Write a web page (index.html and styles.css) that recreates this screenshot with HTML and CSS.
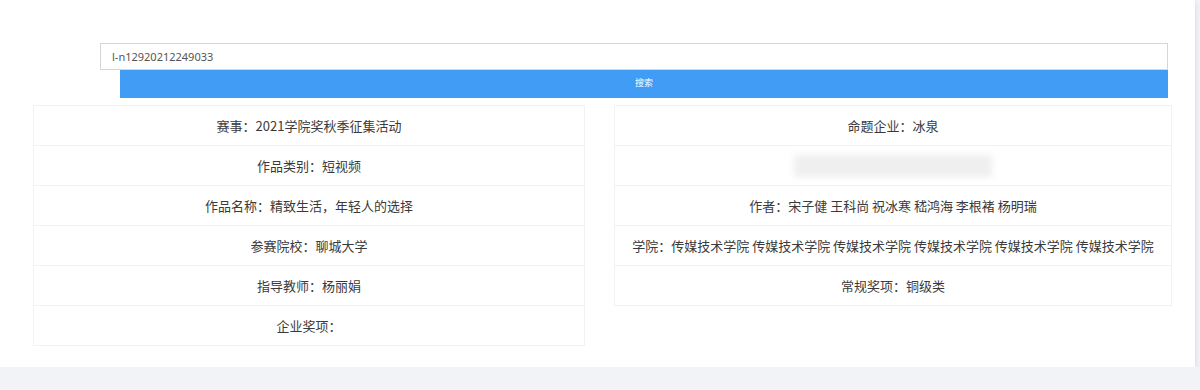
FILE: index.html
```html
<!DOCTYPE html>
<html lang="zh">
<head>
    <meta charset="UTF-8">
    <title>作品查询</title>
    <link rel="stylesheet" href="styles.css">
</head>
<body>
    <div class="card">
        <div class="search">
            <input class="search-input" type="text" value="l-n12920212249033">
            <button class="search-button">搜索</button>
        </div>
        <div class="info">
            <div class="column">
                <div class="row">赛事：2021学院奖秋季征集活动</div>
                <div class="row">作品类别：短视频</div>
                <div class="row">作品名称：精致生活，年轻人的选择</div>
                <div class="row">参赛院校：聊城大学</div>
                <div class="row">指导教师：杨丽娟</div>
                <div class="row">企业奖项：</div>
            </div>
            <div class="column right">
                <div class="row">命题企业：冰泉</div>
                <div class="row"><span class="blurred"></span></div>
                <div class="row">作者：宋子健 王科尚 祝冰寒 嵇鸿海 李根褚 杨明瑞</div>
                <div class="row">学院：传媒技术学院 传媒技术学院 传媒技术学院 传媒技术学院 传媒技术学院 传媒技术学院</div>
                <div class="row">常规奖项：铜级类</div>
            </div>
        </div>
    </div>
</body>
</html>
```

FILE: styles.css
```css
body {
    margin: 0;
    background: #f2f3f6;
    font-family: "Noto Sans CJK SC", "Noto Sans", sans-serif;
    color: #3a3a3a;
}
.card {
    width: 1195px;
    height: 367px;
    background: #fff;
    box-shadow: 0 2px 6px rgba(0, 0, 0, 0.12);
    padding-top: 43px;
    box-sizing: border-box;
}
.search {
    display: flex;
    flex-direction: column;
    margin-left: 100px;
    width: 1068px;
}
.search-input {
    height: 27px;
    box-sizing: border-box;
    border: 1px solid #d6d6d6;
    padding: 0 11px;
    font-family: "Noto Sans", sans-serif;
    font-size: 11px;
    color: #555;
    outline: none;
}
.search-button {
    margin-left: 20px;
    height: 28px;
    border: none;
    background: #409cf5;
    color: #fff;
    font-family: "Noto Sans CJK SC", sans-serif;
    font-size: 9px;
    padding: 0 0 4px;
}
.info {
    display: flex;
    margin-top: 8px;
    margin-left: 33px;
    gap: 29px;
    align-items: flex-start;
}
.column {
    width: 552px;
    display: flex;
    flex-direction: column;
}
.column.right {
    width: 558px;
}
.row {
    height: 41px;
    box-sizing: border-box;
    border: 1px solid #f2f2f2;
    margin-top: -1px;
    display: flex;
    align-items: center;
    justify-content: center;
    font-size: 13px;
    white-space: nowrap;
}
.blurred {
    width: 198px;
    height: 22px;
    background: #efefef;
    filter: blur(3px);
}
```
